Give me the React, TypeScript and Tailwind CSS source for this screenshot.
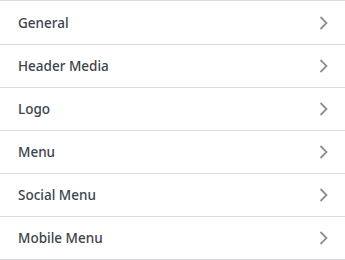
const sections = [
  "General",
  "Header Media",
  "Logo",
  "Menu",
  "Social Menu",
  "Mobile Menu",
];

const Chevron = () => (
  <svg
    width="9"
    height="14"
    viewBox="0 0 9 14"
    fill="none"
    stroke="#8c8f94"
    strokeWidth="1.8"
    aria-hidden="true"
  >
    <polyline points="1.5,1 7.5,7 1.5,13" />
  </svg>
);

export default function App() {
  return (
    <div className="w-[345px] h-[260px] bg-white font-['Noto_Sans','Open_Sans',sans-serif]">
      <ul className="border-t border-[#dcdcde] pt-px">
        {sections.map((title) => (
          <li
            key={title}
            className="flex h-[43px] items-center justify-between border-b border-[#dcdcde] pl-[18px] pr-[17px]"
          >
            <span className="text-[13.5px] font-medium text-[#3c434a]">{title}</span>
            <Chevron />
          </li>
        ))}
      </ul>
    </div>
  );
}
